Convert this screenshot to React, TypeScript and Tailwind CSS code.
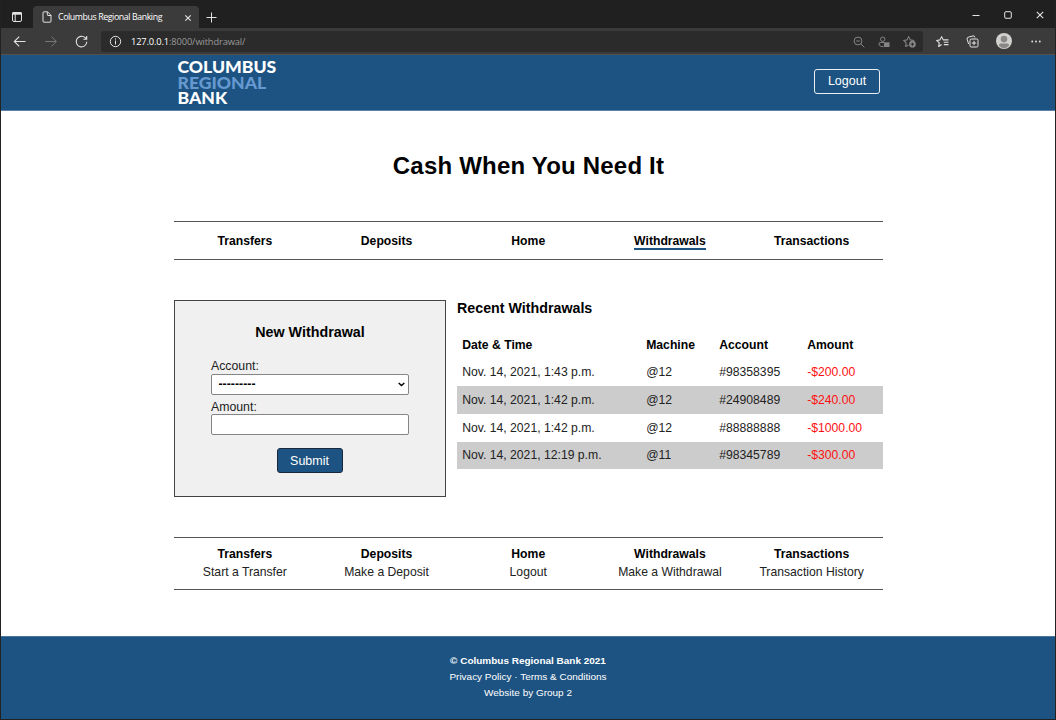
import React from "react";

const navItems = ["Transfers", "Deposits", "Home", "Withdrawals", "Transactions"];

const footerItems = [
  { title: "Transfers", link: "Start a Transfer" },
  { title: "Deposits", link: "Make a Deposit" },
  { title: "Home", link: "Logout" },
  { title: "Withdrawals", link: "Make a Withdrawal" },
  { title: "Transactions", link: "Transaction History" },
];

const withdrawals = [
  { date: "Nov. 14, 2021, 1:43 p.m.", machine: "@12", account: "#98358395", amount: "-$200.00" },
  { date: "Nov. 14, 2021, 1:42 p.m.", machine: "@12", account: "#24908489", amount: "-$240.00" },
  { date: "Nov. 14, 2021, 1:42 p.m.", machine: "@12", account: "#88888888", amount: "-$1000.00" },
  { date: "Nov. 14, 2021, 12:19 p.m.", machine: "@11", account: "#98345789", amount: "-$300.00" },
];

function TabStrip() {
  return (
    <div className="flex h-7 items-end bg-[#202020] text-[#e4e4e4]">
      <svg className="mb-[5px] ml-2.5 h-3 w-3" viewBox="0 0 12 12" fill="none" stroke="currentColor">
        <rect x="1.500" y="1.500" width="9" height="9" rx="1.500" />
        <path d="M1.200 2.500h9.600" strokeWidth="2.400" />
        <path d="M4.200 3v7.500" />
      </svg>
      <div className="ml-2.5 flex h-[22px] w-[166px] items-center rounded-t-[4px] bg-[#3b3b3b]">
        <svg className="ml-2 h-3 w-3 shrink-0" viewBox="0 0 12 12" fill="none" stroke="currentColor">
          <path d="M3 .8h3.500L10 4.300v5.900a1 1 0 0 1-1 1H3a1 1 0 0 1-1-1V1.800a1 1 0 0 1 1-1zM6.300.8v3a.7.7 0 0 0 .7.7h3" />
        </svg>
        <span className="ml-[5px] flex-1 whitespace-nowrap pt-px font-['Open_Sans',sans-serif] text-[8.800px] tracking-[-0.410px] text-white">
          Columbus Regional Banking
        </span>
        <svg className="mr-[7px] mt-px h-2 w-2" viewBox="0 0 8 8" stroke="currentColor" strokeWidth="1.100">
          <path d="M1.300 1.300l5.400 5.400M6.700 1.300L1.300 6.700" />
        </svg>
      </div>
      <svg className="mb-[5px] ml-[7px] h-[11px] w-[11px]" viewBox="0 0 11 11" stroke="currentColor">
        <path d="M5.500.5v10M.5 5.500h10" />
      </svg>
      <div className="mb-[9px] ml-auto flex items-center gap-6 pr-[11.500px]">
        <svg className="h-2 w-2" viewBox="0 0 8 8" stroke="currentColor">
          <path d="M.5 4.500h7" />
        </svg>
        <svg className="h-2 w-2" viewBox="0 0 8 8" fill="none" stroke="currentColor">
          <rect x=".7" y=".7" width="6.600" height="6.600" rx="1.200" />
        </svg>
        <svg className="h-2 w-2" viewBox="0 0 8 8" stroke="currentColor" strokeWidth="1.100">
          <path d="M.8.8l6.400 6.400M7.200.8L.8 7.200" />
        </svg>
      </div>
    </div>
  );
}

function Toolbar() {
  return (
    <div className="flex h-[27px] items-center border-b border-[#54504c] bg-[#3b3b3b] text-[#e4e4e4]">
      <svg className="ml-3 h-3 w-[13px]" viewBox="0 0 13 12" fill="none" stroke="currentColor" strokeWidth="1.100">
        <path d="M12.500 6.500H1.500M6.200 1.700L1.300 6.500l4.900 4.800" />
      </svg>
      <svg className="ml-[19px] h-3 w-[13px] text-[#777]" viewBox="0 0 13 12" fill="none" stroke="currentColor">
        <path d="M.2 6.500h11M6.500 1.700l4.900 4.800-4.900 4.800" />
      </svg>
      <svg className="ml-[17px] h-[13px] w-[13px]" viewBox="0 0 13 13" fill="none" stroke="currentColor" strokeWidth="1.100">
        <path d="M11.800 6.800a5.300 5.300 0 1 1-1.700-4.100L11.500 4M11.700.9V4.200H8.400" />
      </svg>
      <div className="ml-[13px] flex h-[21px] w-[822px] items-center rounded-[3px] bg-[#2b2b2b]">
        <svg className="ml-2 h-[13px] w-[13px]" viewBox="0 0 13 13" fill="none" stroke="currentColor">
          <circle cx="6.500" cy="6.500" r="5.200" />
          <path d="M6.500 5.500v4M6.500 3.300v1.200" />
        </svg>
        <span className="ml-[9px] pt-px font-['Open_Sans',sans-serif] text-[9.300px] tracking-[-0.130px] text-[#9a9a9a]">
          <span className="text-white">127.0.0.1</span>:8000/withdrawal/
        </span>
        <div className="ml-auto flex items-center gap-[13px] pr-[7px] pt-px text-[#858585]">
          <svg className="h-3 w-3" viewBox="0 0 12 12" fill="none" stroke="currentColor">
            <circle cx="5" cy="5" r="3.900" />
            <path d="M7.800 7.800l3.500 3.500M3.200 5h3.600" />
          </svg>
          <svg className="h-3 w-3" viewBox="0 0 12 12" fill="none" stroke="currentColor">
            <circle cx="4.700" cy="3.200" r="2.200" />
            <path d="M6 6.500H2.200C1.400 6.500 1 7 1 7.800c0 1.900 1.300 2.900 4.500 2.900" />
            <rect x="6" y="6.300" width="5.500" height="4.700" fill="currentColor" stroke="none" />
          </svg>
          <svg className="h-[13px] w-[13px]" viewBox="0 0 12 12" fill="none" stroke="currentColor" strokeLinejoin="round">
            <path d="M5 9.200L2.400 10.600l.5-3.300L.6 5l3.100-.5L5.200 1.500l1.500 3 3.600.6" />
            <circle cx="8.700" cy="8.500" r="3.100" fill="currentColor" stroke="none" />
            <path d="M8.700 7v3M7.200 8.500h3" stroke="#2b2b2b" strokeWidth=".9" />
          </svg>
        </div>
      </div>
      <svg className="ml-[13px] h-[13px] w-[13px]" viewBox="0 0 12 12" fill="none" stroke="currentColor" strokeLinejoin="round">
        <path d="M5.200 8.800L2.400 10.600l.6-3.300L.6 5l3.100-.5L5.200 1.500l1.500 3H11.500M7.200 6.700h4.300M7.200 8.900h4.300" />
      </svg>
      <svg className="ml-[17px] h-[13px] w-[13px]" viewBox="0 0 13 13" fill="none" stroke="currentColor">
        <rect x="4" y="4" width="8" height="8" rx="1.200" />
        <path d="M8 5.800v4.400M5.800 8h4.400M2.600 9L1.100 4.100a1.500 1.500 0 0 1 1-1.800L7 .9a1.400 1.400 0 0 1 1.700 1l.2.6" />
      </svg>
      <svg className="ml-[17px] h-4 w-4" viewBox="0 0 16 16">
        <circle cx="8" cy="8" r="8" fill="#d2d0ce" />
        <circle cx="8" cy="6.100" r="3.300" fill="#8a8886" />
        <path d="M2.900 12.500c0-1.500 1-2.100 2.300-2.100h5.600c1.300 0 2.300.6 2.300 2.100A7.500 7.500 0 0 1 8 15.300a7.500 7.500 0 0 1-5.100-2.800z" fill="#8a8886" />
      </svg>
      <svg className="ml-[19px] h-[3px] w-[10px]" viewBox="0 0 10 3" fill="currentColor">
        <circle cx="1.200" cy="1.500" r=".9" />
        <circle cx="5" cy="1.500" r=".9" />
        <circle cx="8.800" cy="1.500" r=".9" />
      </svg>
    </div>
  );
}

function Header() {
  return (
    <header className="h-14 border-b border-[#5b82a6] bg-[#1d5382]">
      <div className="mx-auto flex w-[709px] justify-between">
        <div className="ml-1 pt-[4px] font-['Lato',sans-serif] text-[17.600px] font-black leading-[15.500px] text-white">
          <div>COLUMBUS</div>
          <div className="text-[#6699d0]">REGIONAL</div>
          <div>BANK</div>
        </div>
        <button className="mr-[3px] mt-3.5 h-[25px] w-[66px] rounded-[3px] border border-white/90 pb-0.5 pl-px text-[12.500px] leading-[20px] text-white">
          Logout
        </button>
      </div>
    </header>
  );
}

function WithdrawalForm() {
  return (
    <form className="h-[197px] w-[272px] border border-[#444] bg-[#f0f0f0] px-9">
      <h2 className="mt-[21px] pl-px text-center text-[14.300px] font-bold leading-5">New Withdrawal</h2>
      <label className="mt-4 block pl-[0.500px] text-[12.300px] leading-4 text-[#222]">Account:</label>
      <div className="flex h-[21px] w-[198px] items-center justify-between rounded-[2px] border border-[#858585] bg-white pl-[7px] pr-[3px] text-[12.200px]">
        <span className="font-bold tracking-[0.060px]">---------</span>
        <svg className="h-[5px] w-[7px]" viewBox="0 0 7 5" fill="none" stroke="#000" strokeWidth="1.500">
          <path d="M.7 1l2.800 2.600L6.300 1" />
        </svg>
      </div>
      <label className="block h-[19px] pl-[0.500px] pt-1 text-[12.300px] leading-4 text-[#222]">Amount:</label>
      <input className="block h-[21px] w-[198px] rounded-[2px] border border-[#858585] bg-white" />
      <button className="mx-auto mt-[13px] block h-[25px] w-[66px] rounded-[3px] border border-[#18293b] bg-[#1d5382] text-[12.500px] leading-[22px] text-white">
        Submit
      </button>
    </form>
  );
}

function RecentWithdrawals() {
  return (
    <section className="w-[426px]">
      <h2 className="pl-[0.500px] text-[14.250px] font-bold leading-[17px]">Recent Withdrawals</h2>
      <table className="mt-3.5 w-full table-fixed border-collapse text-left text-[12.200px]">
        <colgroup>
          <col className="w-[184px]" />
          <col className="w-[73px]" />
          <col className="w-[88px]" />
          <col />
        </colgroup>
        <thead>
          <tr className="h-[27.700px]">
            {["Date & Time", "Machine", "Account", "Amount"].map((h) => (
              <th key={h} className="p-0 pl-[5.700px] font-bold">{h}</th>
            ))}
          </tr>
        </thead>
        <tbody className="text-[#222]">
          {withdrawals.map((w, i) => (
            <tr key={i} className="h-[27.700px] even:bg-[#ccc]">
              <td className="p-0 pl-[5.700px]">{w.date}</td>
              <td className="p-0 pl-[5.700px]">{w.machine}</td>
              <td className="p-0 pl-[5.700px]">{w.account}</td>
              <td className="p-0 pl-[5.700px] text-[#ff1010]">{w.amount}</td>
            </tr>
          ))}
        </tbody>
      </table>
    </section>
  );
}

export default function App() {
  return (
    <div className="flex h-[720px] w-[1056px] flex-col overflow-hidden border-x border-b border-[#222] bg-white font-['Liberation_Sans',Arial,sans-serif] text-black">
      <TabStrip />
      <Toolbar />
      <Header />
      <main className="mx-auto w-[709px] flex-1">
        <h1 className="mt-[39px] pl-px text-center text-[24px] font-bold leading-8 tracking-[0.200px]">Cash When You Need It</h1>
        <nav className="mt-[39px] grid h-[39px] grid-cols-5 border-y border-[#555] pt-[11px] pl-[0.500px] text-center text-[12.200px] font-bold leading-4">
          {navItems.map((item) => (
            <div key={item}>
              {item === "Withdrawals" ? (
                <span className="inline-block h-[17px] border-b-2 border-[#1d5382]">{item}</span>
              ) : (
                <span className="inline-block h-[17px]">{item}</span>
              )}
            </div>
          ))}
        </nav>
        <div className="mt-10 flex gap-[11px]">
          <WithdrawalForm />
          <RecentWithdrawals />
        </div>
        <div className="mt-10 grid h-[53px] grid-cols-5 border-y border-[#555] pl-[0.500px] pt-[7px] text-center text-[12.200px] leading-[18px]">
          {footerItems.map((item) => (
            <div key={item.title}>
              <div className="font-bold">{item.title}</div>
              <div className="text-[#222]">{item.link}</div>
            </div>
          ))}
        </div>
      </main>
      <footer className="h-[83px] border-t border-[#4a759b] bg-[#1d5382] pt-4 text-center text-[9.980px] leading-4 text-white">
        <div className="font-bold">© Columbus Regional Bank 2021</div>
        <div>Privacy Policy · Terms &amp; Conditions</div>
        <div>Website by Group 2</div>
      </footer>
    </div>
  );
}
